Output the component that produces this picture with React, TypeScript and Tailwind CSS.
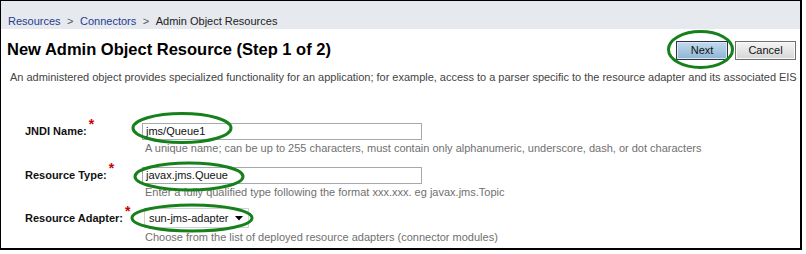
export default function App() {
  return (
    <div className="w-[806px] h-[254px] bg-white font-['Liberation_Sans',Arial,sans-serif] text-[11px]">
      <div className="relative w-[802px] h-[250px] border-black border-l border-t border-r-2 border-b-2 flex flex-col">
        <div className="h-[28px] bg-[#e6e9ed] flex items-end pl-[7px] pb-[1px] leading-[13px]">
          <span className="text-[#1f3d92]">Resources</span>
          <span className="text-[#555] mx-[6.5px]">&gt;</span>
          <span className="text-[#1f3d92]">Connectors</span>
          <span className="text-[#555] mx-[6.5px]">&gt;</span>
          <span className="text-[#222]">Admin Object Resources</span>
        </div>
        <div className="h-[31px] flex justify-between">
          <div className="pl-[6px] pt-[10px] text-[16.5px] font-bold leading-[20px] text-black">
            New Admin Object Resource (Step 1 of 2)
          </div>
          <div className="pt-[12px] pr-[4px] flex gap-[7px]">
            <button className="w-[52px] h-[19px] border border-[#2a3644] bg-gradient-to-b from-[#c3daee] to-[#8eb5d5] shadow-[inset_0_0_0_1px_#d9e8f4] text-[11px] text-[#111] leading-none">
              Next
            </button>
            <button className="w-[61px] h-[19px] border border-[#6f6f6f] bg-gradient-to-b from-[#f5f5f5] to-[#d6d6d6] shadow-[inset_0_0_0_1px_#fafafa] text-[11px] text-[#111] leading-none">
              Cancel
            </button>
          </div>
        </div>
        <div className="pl-[9px] mt-[11px] leading-[13px] text-[#444] tracking-[-0.02px] whitespace-nowrap">
          An administered object provides specialized functionality for an application; for example, access to a parser specific to the resource adapter and its associated EIS
        </div>

        <div className="flex items-center h-[17px] mt-[39px] pl-[24px]">
          <div className="w-[117px] font-bold text-[#111] flex">
            JNDI Name:<span className="text-[#c00] text-[14px] relative top-[-6px] ml-[2px] leading-none">*</span>
          </div>
          <div className="w-[280px] h-[17px] border border-[#a3a9ae] pl-[3px] flex items-center text-[#111]">jms/Queue1</div>
        </div>
        <div className="pl-[144px] mt-[2px] leading-[13px] text-[#707070]">
          A unique name; can be up to 255 characters, must contain only alphanumeric, underscore, dash, or dot characters
        </div>

        <div className="flex items-center h-[17px] mt-[12px] pl-[24px]">
          <div className="w-[117px] font-bold text-[#111] flex">
            Resource Type:<span className="text-[#c00] text-[14px] relative top-[-6px] ml-[2px] leading-none">*</span>
          </div>
          <div className="w-[280px] h-[17px] border border-[#a3a9ae] pl-[3px] flex items-center text-[#111]">javax.jms.Queue</div>
        </div>
        <div className="pl-[144px] mt-[2px] leading-[13px] text-[#707070]">
          Enter a fully qualified type following the format xxx.xxx. eg javax.jms.Topic
        </div>

        <div className="flex items-center h-[20px] mt-[9px] pl-[24px]">
          <div className="w-[117px] font-bold text-[#111] flex">
            Resource Adapter:<span className="text-[#c00] text-[14px] relative top-[-6px] ml-[2px] leading-none">*</span>
          </div>
          <div className="ml-[2px] w-[105px] h-[20px] border border-[#cfd2d5] bg-white pl-[4px] pr-[4px] flex items-center justify-between text-[#111]">
            <span>sun-jms-adapter</span>
            <svg width="8" height="5" viewBox="0 0 8 5" className="mr-[1px]">
              <polygon points="0,0 8,0 4,4.5" fill="#000" />
            </svg>
          </div>
        </div>
        <div className="pl-[144px] mt-[3px] leading-[13px] text-[#707070]">
          Choose from the list of deployed resource adapters (connector modules)
        </div>

        <svg
          className="absolute left-[-1px] top-[-1px] pointer-events-none"
          width="806"
          height="254"
          viewBox="0 0 806 254"
        >
          <g fill="none" stroke="#16801a" strokeWidth="3">
            <ellipse cx="700.5" cy="49.5" rx="32" ry="18" />
            <ellipse cx="182" cy="128" rx="49" ry="14.5" />
            <ellipse cx="189" cy="176.5" rx="54" ry="13.5" />
            <ellipse cx="192" cy="218" rx="60" ry="13" />
          </g>
        </svg>
      </div>
    </div>
  );
}
